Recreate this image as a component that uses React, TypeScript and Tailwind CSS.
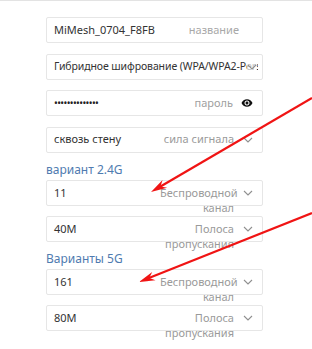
const FONT = { fontFamily: '"Noto Sans", "Open Sans", sans-serif' };

function Chevron() {
  return (
    <svg width="10" height="6" viewBox="0 0 10 6" className="shrink-0">
      <path d="M1 1 L5 5 L9 1" fill="none" stroke="#8f8f8f" strokeWidth="1.1" />
    </svg>
  );
}

function Eye() {
  return (
    <svg width="12" height="12" viewBox="0 0 24 24" className="shrink-0">
      <path
        fill="#111"
        d="M12 4.5C7 4.5 2.73 7.61 1 12c1.73 4.39 6 7.5 11 7.5s9.27-3.11 11-7.5c-1.73-4.39-6-7.5-11-7.5zM12 17c-2.76 0-5-2.24-5-5s2.24-5 5-5 5 2.24 5 5-2.24 5-5 5zm0-8c-1.66 0-3 1.34-3 3s1.34 3 3 3 3-1.34 3-3-1.34-3-3-3z"
      />
    </svg>
  );
}

function Box({ children, tight }: { children: React.ReactNode; tight?: boolean }) {
  return (
    <div
      className={
        tight
          ? "h-[26px] flex items-center border border-[#e6e6e6] rounded-[2px] bg-white pl-[7px] pr-[4px]"
          : "h-[26px] flex items-center border border-[#e6e6e6] rounded-[2px] bg-white pl-[7px] pr-[9px]"
      }
    >
      {children}
    </div>
  );
}

// select row whose hint wraps below the box
function SelectRow({ value, hint }: { value: string; hint: string }) {
  return (
    <div className="h-[26px] flex items-start border border-[#e6e6e6] rounded-[2px] bg-white pl-[7px] pr-[9px]">
      <span className="flex-1 text-[11px] leading-[24px] text-[#333]">{value}</span>
      <span className="w-[74px] text-right text-[11px] leading-[15px] text-[#9a9a9a] pt-[4px]">
        {hint}
      </span>
      <span className="ml-[9px] h-[24px] flex items-center">
        <Chevron />
      </span>
    </div>
  );
}

function Arrow({ x1, y1, x2, y2 }: { x1: number; y1: number; x2: number; y2: number }) {
  const dx = x1 - x2;
  const dy = y1 - y2;
  const len = Math.sqrt(dx * dx + dy * dy);
  const ux = dx / len;
  const uy = dy / len;
  const bx = x2 + ux * 16;
  const by = y2 + uy * 16;
  const px = -uy * 4.5;
  const py = ux * 4.5;
  return (
    <g>
      <line x1={x1} y1={y1} x2={x2 + ux * 10} y2={y2 + uy * 10} stroke="#f01414" strokeWidth="2.2" />
      <polygon
        points={`${x2},${y2} ${bx + px},${by + py} ${x2 + ux * 11},${y2 + uy * 11} ${bx - px},${by - py}`}
        fill="#f01414"
      />
    </g>
  );
}

export default function App() {
  return (
    <div className="relative w-[312px] h-[349px] bg-white overflow-hidden border-t border-[#e3e3e3]" style={FONT}>
      <div className="w-[217px] ml-[46px] pt-[16px] flex flex-col">
        <div className="flex flex-col gap-[10.5px]">
          <Box>
            <span className="flex-1 text-[11px] text-[#333]">MiMesh_0704_F8FB</span>
            <span className="text-[11px] text-[#a8a8a8] mr-[14px]">название</span>
          </Box>
          <div className="relative">
            <Box tight>
              <span className="flex-1 text-[10.5px] tracking-[-0.1px] text-[#333] whitespace-nowrap overflow-hidden">
                Гибридное шифрование (WPA/WPA2-Personal)
              </span>
            </Box>
            <span className="absolute right-[6px] top-[10px] bg-white/70">
              <Chevron />
            </span>
          </div>
          <Box>
            <span className="flex-1 text-[10px] tracking-[-0.6px] text-[#222]">••••••••••••••</span>
            <span className="text-[11px] text-[#a0a0a0]">пароль</span>
            <span className="ml-[8px]">
              <Eye />
            </span>
          </Box>
          <Box>
            <span className="flex-1 text-[11px] text-[#333]">сквозь стену</span>
            <span className="text-[11px] text-[#9a9a9a]">сила сигнала</span>
            <span className="ml-[9px]">
              <Chevron />
            </span>
          </Box>
        </div>

        <div className="mt-[11px] mb-[4px] text-[12px] leading-[12px] text-[#4f7bb0]">вариант 2.4G</div>
        <div className="flex flex-col gap-[10px]">
          <SelectRow value="11" hint="Беспроводной канал" />
          <SelectRow value="40M" hint="Полоса пропускания" />
        </div>

        <div className="mt-[11px] mb-[4px] text-[12px] leading-[12px] text-[#4f7bb0]">Варианты 5G</div>
        <div className="flex flex-col gap-[10px]">
          <SelectRow value="161" hint="Беспроводной канал" />
          <SelectRow value="80M" hint="Полоса пропускания" />
        </div>
      </div>

      <svg className="absolute inset-0 pointer-events-none" width="312" height="349">
        <Arrow x1={312} y1={97} x2={151} y2={191} />
        <Arrow x1={312} y1={212} x2={139} y2={281} />
      </svg>
    </div>
  );
}
